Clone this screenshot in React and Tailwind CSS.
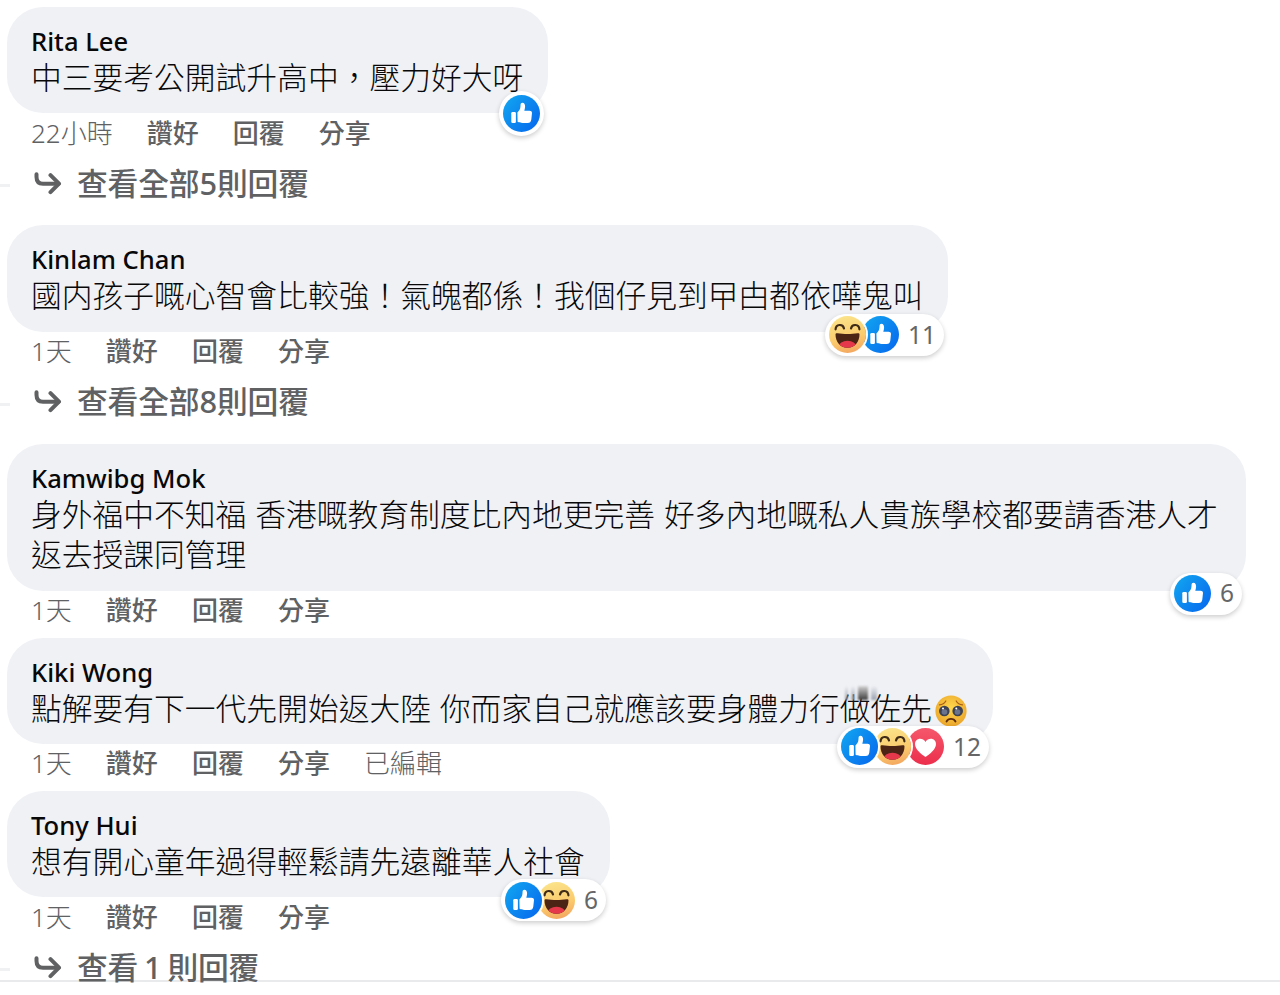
import React from "react";

const comments = [
  {
    name: "Rita Lee",
    lines: ["中三要考公開試升高中，壓力好大呀"],
    width: "w-[541px]",
    time: "22小時",
    reactions: ["like"],
    replies: "查看全部5則回覆",
  },
  {
    name: "Kinlam Chan",
    lines: ["國内孩子嘅心智會比較強！氣魄都係！我個仔見到曱甴都依嘩鬼叫"],
    width: "w-[941px]",
    time: "1天",
    reactions: ["haha", "like"],
    count: 11,
    replies: "查看全部8則回覆",
  },
  {
    name: "Kamwibg Mok",
    lines: [
      "身外福中不知福 香港嘅教育制度比內地更完善 好多內地嘅私人貴族學校都要請香港人才",
      "返去授課同管理",
    ],
    width: "w-[1239px]",
    time: "1天",
    reactions: ["like"],
    count: 6,
  },
  {
    name: "Kiki Wong",
    lines: ["點解要有下一代先開始返大陸 你而家自己就應該要身體力行做佐先"],
    width: "w-[986px]",
    time: "1天",
    edited: true,
    pleading: true,
    reactions: ["like", "haha", "love"],
    count: 12,
  },
  {
    name: "Tony Hui",
    lines: ["想有開心童年過得輕鬆請先遠離華人社會"],
    width: "w-[603px]",
    time: "1天",
    reactions: ["like", "haha"],
    count: 6,
    replies: "查看 1 則回覆",
  },
];

const LikeIcon = () => (
  <svg viewBox="0 0 37 37" className="block w-full h-full">
    <defs>
      <linearGradient id="likeBg" x1="0" y1="0.1" x2="1" y2="0.9">
        <stop offset="0" stopColor="#12a5f0" />
        <stop offset="1" stopColor="#0668ee" />
      </linearGradient>
    </defs>
    <circle cx="18.5" cy="18.5" r="18.5" fill="url(#likeBg)" />
    <rect x="8.3" y="17" width="4.6" height="11" rx="1.2" fill="#fff" />
    <path
      d="M14.4 17.4c1.6-1.4 2.8-3.2 3-5.5l.2-2.3c.1-1.2.8-1.9 1.8-1.9 1.8 0 2.7 1.5 2.7 3.6 0 1.6-.4 3-.8 4.5h5.2c1.5 0 2.5.9 2.500 2.200l-.7 6.400c-.3 2.400-1.500 3.500-3.600 3.500h-5.200c-1.900 0-3.400-.4-4.900-1.200z"
      fill="#fff"
    />
  </svg>
);

const HahaIcon = () => (
  <svg viewBox="0 0 37 37" className="block w-full h-full">
    <defs>
      <linearGradient id="hahaBg" x1="0.4" y1="0" x2="0.65" y2="1">
        <stop offset="0" stopColor="#fbe38a" />
        <stop offset="0.6" stopColor="#fbca6c" />
        <stop offset="1" stopColor="#f3a660" />
      </linearGradient>
      <clipPath id="hahaMouth">
        <path d="M6.500 18.300c0-1 .8-1.300 2-1.100 6 1 14 1 20 0 1.200-.2 2 .1 2 1.100 0 7.500-4.500 13.500-12 13.500s-12-6-12-13.500z" />
      </clipPath>
    </defs>
    <circle cx="18.5" cy="18.5" r="18.5" fill="url(#hahaBg)" />
    <g fill="none" stroke="#3f2b18" strokeWidth="2.2" strokeLinecap="round">
      <path d="M6.600 13.300c.2-5.400 7.400-5.800 8.400-.8" />
      <path d="M22 12.500c1-5 8.200-4.600 8.400.8" />
    </g>
    <g clipPath="url(#hahaMouth)">
      <rect x="5" y="15" width="27" height="18" fill="#4b2415" />
      <ellipse cx="18.5" cy="30.5" rx="8.8" ry="5.8" fill="#e5394b" />
    </g>
  </svg>
);

const LoveIcon = () => (
  <svg viewBox="0 0 37 37" className="block w-full h-full">
    <defs>
      <linearGradient id="loveBg" x1="0.5" y1="0" x2="0.5" y2="1">
        <stop offset="0" stopColor="#f5576b" />
        <stop offset="1" stopColor="#ec2e4c" />
      </linearGradient>
    </defs>
    <circle cx="18.5" cy="18.5" r="18.5" fill="url(#loveBg)" />
    <path
      d="M18.5 29C14 26 8 21.500 8 16.100c0-3.200 2.300-5.300 5.100-5.300 2.200 0 4.200 1.100 5.400 3.200 1.200-2.100 3.200-3.200 5.400-3.200 2.800 0 5.100 2.100 5.100 5.300 0 5.400-6 9.900-10.500 12.900z"
      fill="#fff"
    />
  </svg>
);

const PleadingFace = () => (
  <svg viewBox="0 0 32 32" className="block w-8 h-8 mt-[7px] ml-[3px]">
    <defs>
      <radialGradient id="pleadBg" cx="0.5" cy="0.4" r="0.6">
        <stop offset="0" stopColor="#ffd84e" />
        <stop offset="1" stopColor="#eba62b" />
      </radialGradient>
    </defs>
    <circle cx="16" cy="16" r="15.6" fill="url(#pleadBg)" />
    <g fill="none" stroke="#a85f16" strokeWidth="1.2" strokeLinecap="round">
      <path d="M4.500 9.800c2.500-.2 5-1.600 6.300-3.800" />
      <path d="M27.500 9.800c-2.500-.2-5-1.600-6.300-3.800" />
    </g>
    <circle cx="9.3" cy="16" r="5.3" fill="#3d4354" />
    <circle cx="22.7" cy="16" r="5.3" fill="#3d4354" />
    <circle cx="9.5" cy="17" r="2.8" fill="#69738e" />
    <circle cx="22.5" cy="17" r="2.8" fill="#69738e" />
    <circle cx="8" cy="13.5" r="1" fill="#fff" />
    <circle cx="21.3" cy="13.5" r="1" fill="#fff" />
    <path
      d="M11.500 26.500c1.800-3.600 7.200-3.600 9 0"
      fill="none"
      stroke="#5c2c0c"
      strokeWidth="1.8"
      strokeLinecap="round"
    />
  </svg>
);

const ReplyArrow = () => (
  <svg
    viewBox="0 0 28 24"
    className="w-7 h-6"
    fill="none"
    stroke="#606163"
    strokeWidth="4"
    strokeLinecap="round"
    strokeLinejoin="round"
  >
    <path d="M2.500 3.200v2.800c0 4.400 2.300 6.700 6.500 6.700h15.500" />
    <path d="M16.500 4.200l8.500 8.500-8.500 8.500" />
  </svg>
);

const icons = { like: LikeIcon, haha: HahaIcon, love: LoveIcon };
const layers = ["z-30", "z-20", "z-10"];

const Reactions = ({ items, count }) => (
  <div
    className={`absolute right-1 flex items-center rounded-full bg-white shadow-[0_2px_5px_rgba(0,0,0,0.2)] ${
      count ? "-bottom-6 h-[42px] pl-1 pr-2" : "-bottom-[23px] p-1"
    }`}
  >
    {items.map((item, i) => {
      const Icon = icons[item];
      return (
        <span
          key={item}
          className={`relative ${layers[i]} w-[37px] h-[37px] shrink-0 rounded-full ring-2 ring-white ${
            i > 0 ? "-ml-1" : ""
          }`}
        >
          <Icon />
        </span>
      );
    })}
    {count && (
      <span className="ml-[9px] text-[24.5px] leading-none text-[#656668]">
        {count}
      </span>
    )}
  </div>
);

const Comment = ({ comment }) => (
  <div>
    <div
      className={`relative ${comment.width} rounded-[36px] bg-[#f0f1f5] pt-[17px] pb-4 pl-6 text-[#080809]`}
    >
      <p className="h-[33px] text-[25.6px] leading-[36px] font-medium whitespace-nowrap">
        {comment.name}
      </p>
      {comment.lines.map((line) => (
        <div key={line} className="flex h-[40.4px]">
          <p className="text-[30.77px] leading-[40px] font-light whitespace-nowrap [word-spacing:0.8px]">
            {line}
          </p>
          {comment.pleading && <PleadingFace />}
        </div>
      ))}
      {comment.pleading && (
        <div className="absolute left-[838px] top-[48px] flex h-[14px] w-9 gap-[3px] blur-[1px]">
          <span className="w-[3px] bg-linear-to-b from-transparent to-gray-400" />
          <span className="w-[4px] bg-linear-to-b from-transparent to-gray-400" />
          <span className="w-[10px] bg-linear-to-b from-neutral-300 to-neutral-700" />
          <span className="w-[6px] bg-linear-to-b from-transparent to-gray-400" />
        </div>
      )}
      <Reactions items={comment.reactions} count={comment.count} />
    </div>

    <div className="flex h-10 items-center gap-[34px] pl-6 text-[26px] leading-10 whitespace-nowrap text-[#606163]">
      <span className="-mt-px font-light">{comment.time}</span>
      <span className="-mt-px font-medium">讚好</span>
      <span className="-mt-px font-medium">回覆</span>
      <span className="-mt-px font-medium">分享</span>
      {comment.edited && <span className="-mt-px font-light">已編輯</span>}
    </div>

    {comment.replies ? (
      <div className="relative flex h-[72px] items-start pl-[27px] pt-[9.4px] text-[30.77px] leading-10 font-medium whitespace-nowrap text-[#606163]">
        <span className="absolute -left-[7px] top-[31px] h-[3px] w-[10px] bg-[#f0f1f3]" />
        <span className="mt-2 mr-[15px]">
          <ReplyArrow />
        </span>
        <span className="[word-spacing:-2px] tracking-[-0.15px]">
          {comment.replies}
        </span>
      </div>
    ) : (
      <div className="h-[7px]" />
    )}
  </div>
);

const App = () => {
  return (
    <div
      lang="zh-Hant"
      className="h-[995px] bg-white font-['Noto_Sans','Noto_Sans_CJK_TC',sans-serif]"
    >
      <div className="h-[982px] border-b-2 border-[#e9eaec] pl-[7px] pt-[7px]">
        {comments.map((comment) => (
          <Comment key={comment.name} comment={comment} />
        ))}
      </div>
    </div>
  );
};

export default App;
